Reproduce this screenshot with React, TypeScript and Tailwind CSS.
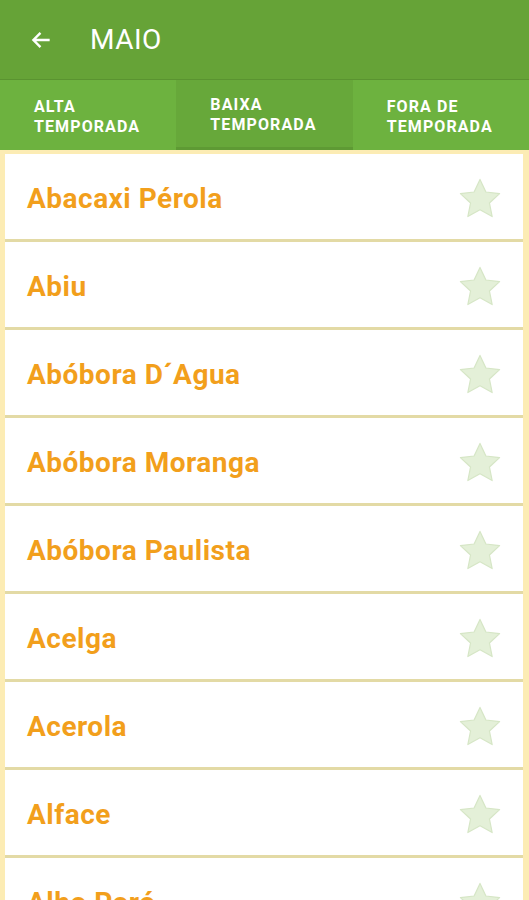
import React from "react";

const items = [
  "Abacaxi Pérola",
  "Abiu",
  "Abóbora D´Agua",
  "Abóbora Moranga",
  "Abóbora Paulista",
  "Acelga",
  "Acerola",
  "Alface",
  "Alho Poró",
];

const tabs = [
  { top: "ALTA", bottom: "TEMPORADA" },
  { top: "BAIXA", bottom: "TEMPORADA", active: true },
  { top: "FORA DE", bottom: "TEMPORADA" },
];

const Star = () => (
  <svg width="48" height="48" viewBox="0 0 24 24" className="shrink-0">
    <path
      d="M12 2.2l2.95 6.3 6.85.8-5.07 4.7 1.35 6.78L12 17.4l-6.08 3.38 1.35-6.78L2.2 9.3l6.85-.8z"
      fill="#e4f0d8"
      stroke="#d6e6c6"
      strokeWidth="0.6"
      strokeLinejoin="round"
    />
  </svg>
);

export default function App() {
  return (
    <div className="w-[529px] h-[900px] overflow-hidden bg-[#fcecb4] font-['Roboto','Liberation_Sans',sans-serif]">
      {/* Toolbar */}
      <div className="h-[80px] bg-[#66a337] flex items-center border-b border-[#5a9330]">
        <svg width="26" height="26" viewBox="0 0 24 24" className="ml-[28px]">
          <path
            d="M20 12H5M11.5 5.5L5 12l6.5 6.5"
            fill="none"
            stroke="white"
            strokeWidth="2.2"
          />
        </svg>
        <span className="ml-[36px] text-white text-[28px] tracking-[0.5px] leading-none">
          MAIO
        </span>
      </div>

      {/* Tabs */}
      <div className="h-[70px] bg-[#6db23f] flex">
        {tabs.map((t, i) => (
          <div
            key={i}
            className={`flex-1 flex flex-col justify-center pl-[34px] pt-[3px] ${
              t.active ? "bg-[#67a83a] border-b-[3px] border-[#5e9a34]" : ""
            }`}
          >
            <span className="text-white font-bold text-[16px] leading-[20px] tracking-[1.1px]">
              {t.top}
            </span>
            <span className="text-white font-bold text-[16px] leading-[20px] tracking-[1.1px]">
              {t.bottom}
            </span>
          </div>
        ))}
      </div>

      {/* List */}
      <div className="pt-[4px] pl-[5px] pr-[6px] flex flex-col">
        {items.map((name) => (
          <div
            key={name}
            className="h-[88px] bg-white border-b-[3px] border-[#e3daa5] flex items-center justify-between pl-[22px] pr-[19px] pt-[5px] shrink-0"
          >
            <span className="text-[#f29f1c] font-bold text-[28px] leading-none tracking-[0.5px]">
              {name}
            </span>
            <Star />
          </div>
        ))}
      </div>
    </div>
  );
}
